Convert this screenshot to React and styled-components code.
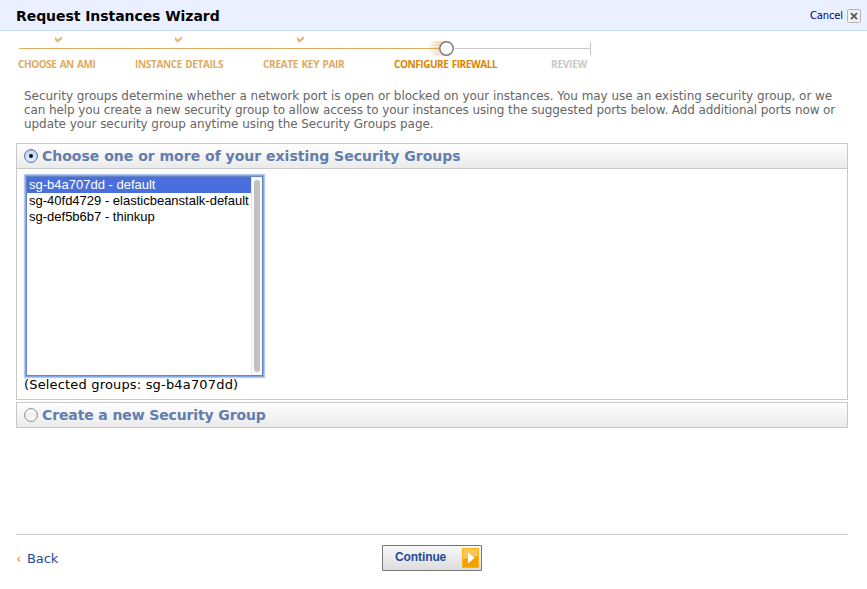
import React from "react";
import styled, { createGlobalStyle } from "styled-components";

const Global = createGlobalStyle`
  * { box-sizing: border-box; }
  body { margin: 0; background: #fff; overflow: hidden; font-family: "DejaVu Sans", Verdana, sans-serif; }
`;

const Page = styled.div`
  width: 867px;
  height: 589px;
  display: flex;
  flex-direction: column;
`;

const Header = styled.header`
  height: 31px;
  flex: none;
  display: flex;
  justify-content: space-between;
  align-items: center;
  padding: 0 6px 0 16px;
  background: #eaf0ff;
  border-bottom: 1px solid #c8def4;
`;

const Title = styled.h1`
  margin: 0;
  padding-top: 1px;
  font: bold 14px/30px "DejaVu Sans", Verdana, sans-serif;
  letter-spacing: -0.06px;
  color: #000;
`;

const Cancel = styled.button`
  display: flex;
  align-items: center;
  gap: 4px;
  padding: 1px 0 0;
  border: 0;
  background: none;
  font: 10px/14px "DejaVu Sans", Verdana, sans-serif;
  letter-spacing: -0.15px;
  color: #000080;
`;

const Progress = styled.nav`
  height: 45px;
  flex: none;
  padding-top: 5px;
  display: flex;
  flex-direction: column;
`;

const Checks = styled.div`
  display: grid;
  grid-template-columns: 120px 122px 120px;
  height: 7px;
  flex: none;
  padding-left: 54px;
`;

const Track = styled.div`
  display: flex;
  align-items: center;
  height: 15px;
  flex: none;
  margin: -2px 0 0 19px;
`;

const Line = styled.div`
  width: ${(p) => p.$width}px;
  height: 1px;
  background: ${(p) => p.$color};
`;

const EndTick = styled.div`
  width: 1px;
  height: 13px;
  background: #c8c8c8;
`;

const Labels = styled.div`
  display: grid;
  grid-template-columns: 117px 128px 131px 157px 60px;
  padding-left: 18px;
`;

const Label = styled.span`
  font: 700 10px/16px "Open Sans", sans-serif;
  letter-spacing: ${(p) => p.$track}px;
  word-spacing: 1px;
  white-space: nowrap;
  color: ${(p) => p.$color};
`;

const Intro = styled.p`
  margin: 13px 0 0 24px;
  height: 54px;
  flex: none;
  font: 12px/14px "DejaVu Sans", Verdana, sans-serif;
  color: #666;
`;

const IntroLine = styled.span`
  display: block;
  white-space: nowrap;
  letter-spacing: ${(p) => p.$track}px;
`;

const Panel = styled.section`
  flex: none;
  width: 832px;
  height: ${(p) => p.$height}px;
  margin: 0 0 2px 16px;
  border: 1px solid #c8c8c8;
`;

const PanelHead = styled.label`
  display: flex;
  align-items: center;
  gap: 4px;
  height: ${(p) => (p.$open ? 25 : 24)}px;
  padding-left: 7px;
  background: linear-gradient(#fff, #eaeaea);
  border-bottom: ${(p) => (p.$open ? "1px solid #c8c8c8" : "0")};
  font: bold 14px/24px "DejaVu Sans", Verdana, sans-serif;
  letter-spacing: ${(p) => p.$track}px;
  color: #627dae;
`;

const PanelBody = styled.div`
  padding: 7px 0 0 8px;
`;

const ListBox = styled.div`
  display: flex;
  width: 237px;
  height: 200px;
  margin-left: 1px;
  border: 1px solid #6486c8;
  box-shadow: 0 0 0 1px #84a6e2, 0 0 1px 2px #b4caf1;
  background: #fff;
`;

const Options = styled.div`
  flex: 1;
  min-width: 0;
`;

const Option = styled.div`
  height: 16px;
  padding-left: 2px;
  font: 13px/16px "Liberation Sans", Arial, sans-serif;
  white-space: nowrap;
  color: ${(p) => (p.$selected ? "#fff" : "#000")};
  background: ${(p) => (p.$selected ? "#4a6fdd" : "transparent")};
`;

const ScrollTrack = styled.div`
  width: 11px;
  padding: 3px 2px;
  border-left: 1px solid #e8e8e8;
  background: #fafafa;
`;

const ScrollThumb = styled.div`
  width: 6px;
  height: 192px;
  border-radius: 3px;
  background: #c1c1c1;
`;

const Selected = styled.div`
  margin: 1px 0 0 -1px;
  font: 13px/15px "DejaVu Sans", Verdana, sans-serif;
  letter-spacing: 0.17px;
  color: #000;
`;

const Footer = styled.footer`
  display: grid;
  grid-template-columns: 366px 100px 1fr;
  width: 832px;
  margin: 104px 0 0 16px;
  padding-top: 10px;
  border-top: 1px solid #c8c8c8;
`;

const Back = styled.a`
  display: flex;
  align-items: center;
  gap: 6px;
  height: 26px;
  padding-top: 1px;
  font: 13px/26px "DejaVu Sans", Verdana, sans-serif;
  letter-spacing: -0.1px;
  color: #1f4a96;
`;

const Continue = styled.button`
  display: flex;
  align-items: center;
  justify-content: space-between;
  width: 100px;
  height: 26px;
  padding: 0 1px 0 12px;
  border: 1px solid #777;
  border-radius: 1px;
  background: linear-gradient(#f7f7f7, #ececed 45%, #dcdcde);
  font: bold 12px/22px "Liberation Sans", Arial, sans-serif;
  letter-spacing: -0.1px;
  color: #1f4a96;
`;

const ContinueText = styled.span`
  padding-bottom: 2px;
`;

const Check = () => (
  <svg width="8" height="7" viewBox="0 0 8 7">
    <path d="M1 0.8V4L3.4 6.8L8 3V0.3L3.6 3.4Z" fill="#e5b877" />
  </svg>
);

const Marker = () => (
  <svg width="28" height="15" viewBox="0 0 28 15">
    <defs>
      <linearGradient id="trail" x1="0" x2="1">
        <stop offset="0" stopColor="#e3a95c" stopOpacity="0" />
        <stop offset="1" stopColor="#e3a95c" stopOpacity="0.9" />
      </linearGradient>
    </defs>
    <path d="M3 0h17v15H5v-2H3v-2H1V9H0V5h2V3h1z" fill="url(#trail)" opacity="0.45" />
    <path d="M6 1h14v1H6zM3 3h16v2H3zM0 6h17v1H0zM0 8h17v1H0zM3 10h16v1H3zM6 12h14v1H6z" fill="url(#trail)" opacity="0.6" />
    <path d="M0 7h18v1H0z" fill="#e0a95e" />
    <circle cx="19.5" cy="7.5" r="6.7" fill="#fff" stroke="#7c7c7c" strokeWidth="1.5" />
  </svg>
);

const Close = () => (
  <svg width="14" height="14" viewBox="0 0 14 14">
    <rect x="0.5" y="0.5" width="13" height="13" rx="1" fill="#f0f0f0" stroke="#b4b4b4" />
    <path d="M4 4.2l6 6M10 4.2l-6 6" stroke="#555" strokeWidth="1.7" />
  </svg>
);

const Radio = ({ on }) => (
  <svg width="14" height="14" viewBox="0 0 14 14">
    <defs>
      <linearGradient id="radioOn" x2="0" y2="1">
        <stop offset="0" stopColor="#b9d1f2" />
        <stop offset="1" stopColor="#e0f5ff" />
      </linearGradient>
      <linearGradient id="radioOff" x2="0" y2="1">
        <stop offset="0" stopColor="#fff" />
        <stop offset="0.5" stopColor="#eee" />
        <stop offset="1" stopColor="#fff" />
      </linearGradient>
    </defs>
    <circle cx="7" cy="7" r="6.4" fill={on ? "url(#radioOn)" : "url(#radioOff)"} stroke={on ? "#5a63a0" : "#888"} />
    {on && <circle cx="7" cy="7" r="2" fill="#111" />}
  </svg>
);

const Arrow = () => (
  <svg width="18" height="20" viewBox="0 0 18 20">
    <path d="M0 0h17v20H0z" fill="#f9b51a" />
    <path d="M1 1h15v18H1z" fill="#f6a000" />
    <path d="M1 1h15v7L1 11z" fill="#f9c65c" />
    <path d="M6 4.5v11l6.5-5.5z" fill="#fff" />
  </svg>
);

const Chevron = () => (
  <svg width="5" height="6" viewBox="0 0 5 6">
    <path d="M4 0.8L1.6 3.2L4 5.6" fill="none" stroke="#e8a040" strokeWidth="1.2" />
  </svg>
);

const steps = [
  ["CHOOSE AN AMI", "#e0aa62", -0.43],
  ["INSTANCE DETAILS", "#e0aa62", -0.34],
  ["CREATE KEY PAIR", "#e0aa62", -0.28],
  ["CONFIGURE FIREWALL", "#db8500", -0.42],
  ["REVIEW", "#c8c8c8", -0.2],
];

const intro = [
  ["Security groups determine whether a network port is open or blocked on your instances. You may use an existing security group, or we", -0.04],
  ["can help you create a new security group to allow access to your instances using the suggested ports below. Add additional ports now or", -0.098],
  ["update your security group anytime using the Security Groups page.", -0.06],
];

const groups = ["sg-b4a707dd - default", "sg-40fd4729 - elasticbeanstalk-default", "sg-def5b6b7 - thinkup"];

export default function App() {
  return (
    <Page>
      <Global />
      <Header>
        <Title>Request Instances Wizard</Title>
        <Cancel>Cancel <Close /></Cancel>
      </Header>
      <Progress>
        <Checks><Check /><Check /><Check /></Checks>
        <Track>
          <Line $width={408} $color="#e0aa62" />
          <Marker />
          <Line $width={135} $color="#c8c8c8" />
          <EndTick />
        </Track>
        <Labels>
          {steps.map(([text, color, track]) => (
            <Label key={text} $color={color} $track={track}>{text}</Label>
          ))}
        </Labels>
      </Progress>
      <Intro>
        {intro.map(([text, track]) => (
          <IntroLine key={text} $track={track}>{text}</IntroLine>
        ))}
      </Intro>
      <Panel $height={257}>
        <PanelHead $open $track={0}><Radio on />Choose one or more of your existing Security Groups</PanelHead>
        <PanelBody>
          <ListBox>
            <Options>
              {groups.map((g, i) => <Option key={g} $selected={i === 0}>{g}</Option>)}
            </Options>
            <ScrollTrack><ScrollThumb /></ScrollTrack>
          </ListBox>
          <Selected>(Selected groups: sg-b4a707dd)</Selected>
        </PanelBody>
      </Panel>
      <Panel $height={26}>
        <PanelHead $track={-0.12}><Radio />Create a new Security Group</PanelHead>
      </Panel>
      <Footer>
        <Back><Chevron />Back</Back>
        <Continue><ContinueText>Continue</ContinueText><Arrow /></Continue>
      </Footer>
    </Page>
  );
}
